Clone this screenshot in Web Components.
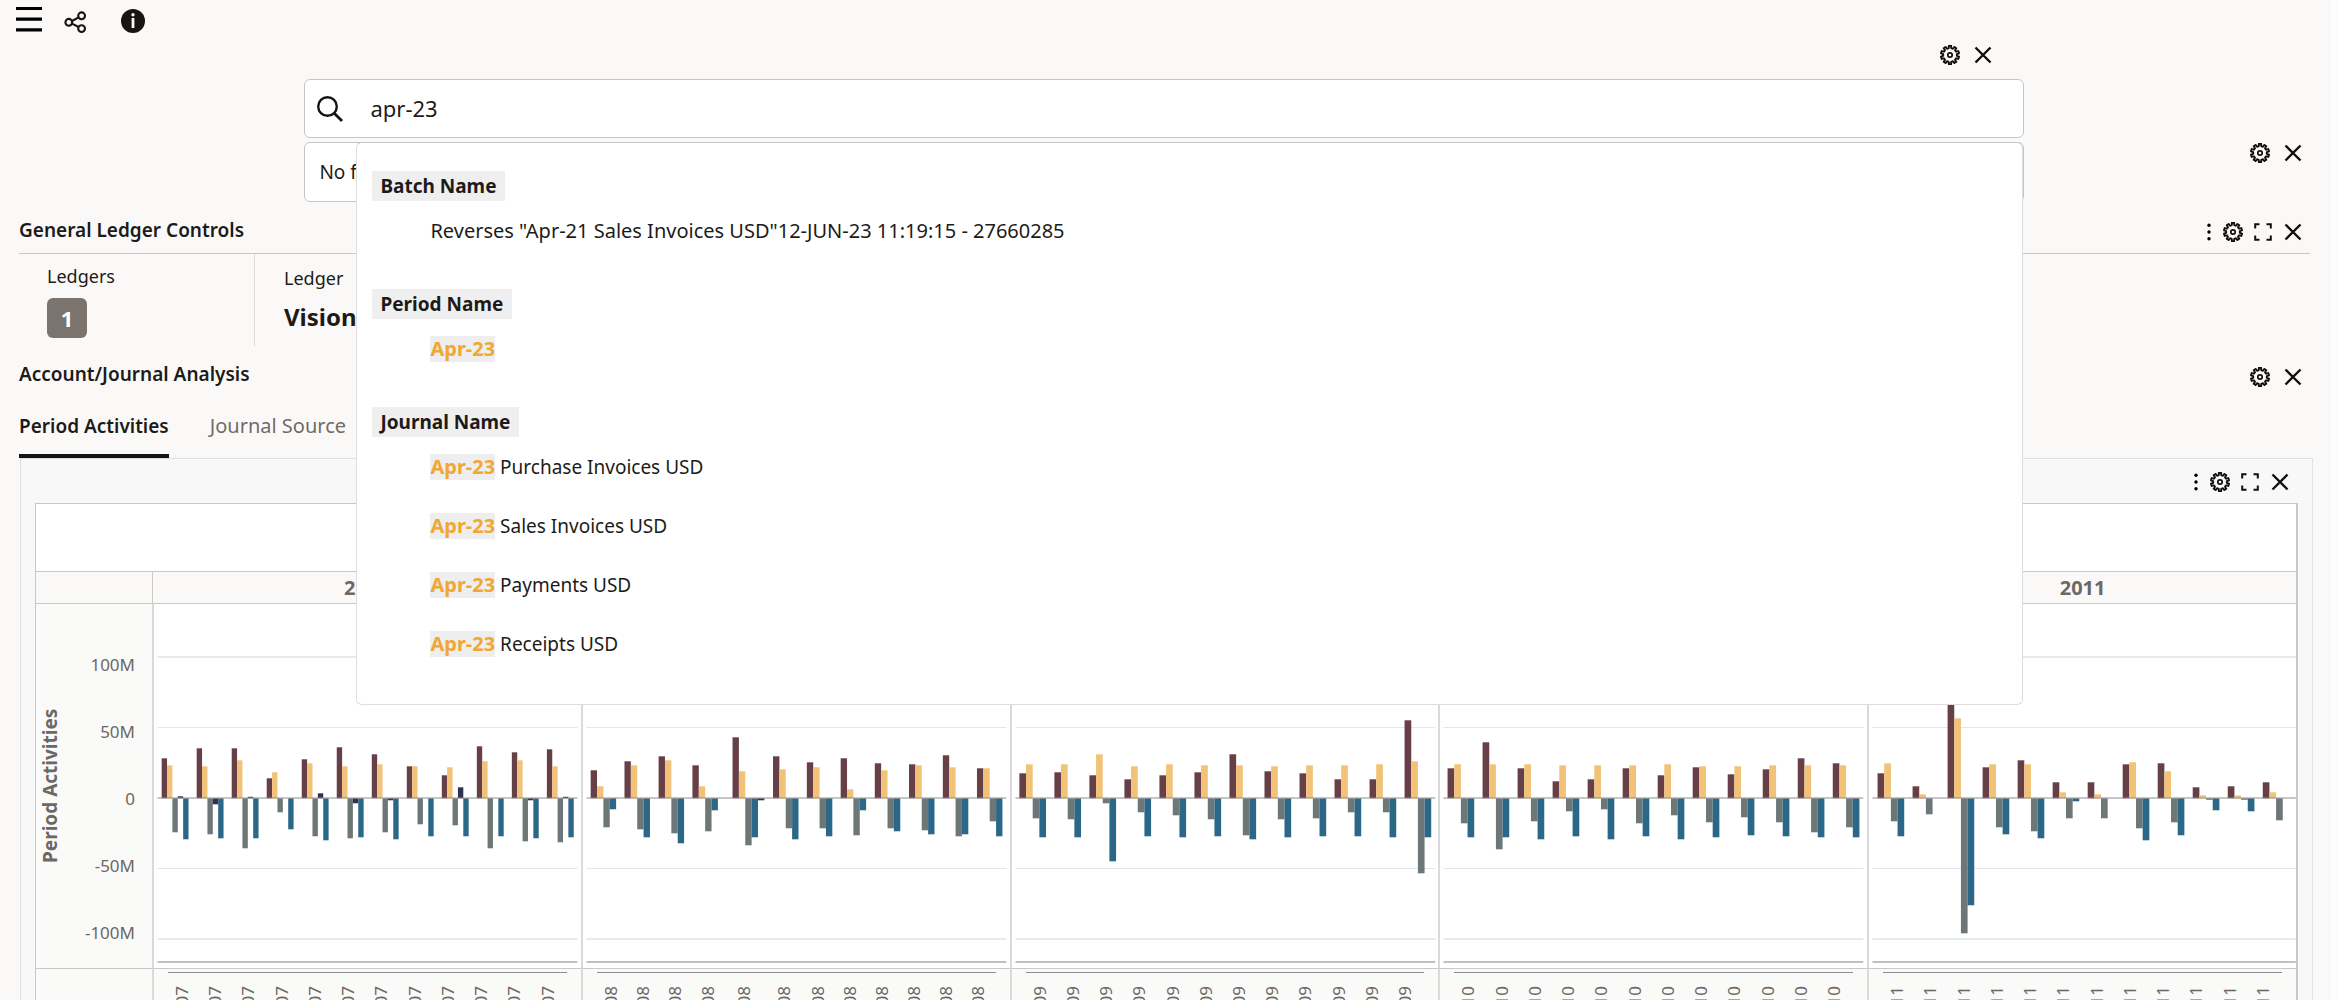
<!DOCTYPE html>
<html lang="en">
<head>
<meta charset="utf-8">
<title>General Ledger</title>
<style>
  html { background: #fefdfd; }
  body {
    margin: 0 7px 0 0;
    height: 100vh;
    overflow: hidden;
    background: #fbf9f8;
    color: #1d1b19;
    font: 19px/28px "Noto Sans", "Open Sans", sans-serif;
  }
</style>
</head>
<body>
<gl-header></gl-header>
<main>
  <search-panel query="apr-23">
    <suggest-group name="Batch Name">
      <suggest-item large>Reverses "Apr-21 Sales Invoices USD"12-JUN-23 11:19:15 - 27660285</suggest-item>
    </suggest-group>
    <suggest-group name="Period Name">
      <suggest-item match="Apr-23"></suggest-item>
    </suggest-group>
    <suggest-group name="Journal Name">
      <suggest-item match="Apr-23"> Purchase Invoices USD</suggest-item>
      <suggest-item match="Apr-23"> Sales Invoices USD</suggest-item>
      <suggest-item match="Apr-23"> Payments USD</suggest-item>
      <suggest-item match="Apr-23"> Receipts USD</suggest-item>
    </suggest-group>
  </search-panel>
  <filter-bar>No f</filter-bar>
  <gl-section heading="General Ledger Controls" actions="menu gear expand close" ruled>
    <kpi-strip>
      <kpi-badge label="Ledgers">1</kpi-badge>
      <kpi-value label="Ledger">Vision</kpi-value>
    </kpi-strip>
  </gl-section>
  <gl-section heading="Account/Journal Analysis" actions="gear close">
    <tab-bar tabs="Period Activities|Journal Source"></tab-bar>
    <chart-panel></chart-panel>
  </gl-section>
</main>

<script>
const gearPath = (() => {
  const teeth = 10, step = Math.PI * 2 / teeth, pts = [];
  for (let i = 0; i < teeth; i++) {
    const a = i * step - Math.PI / 2;
    for (const [r, o] of [[6.9, -.29], [9.2, -.2], [9.2, .2], [6.9, .29]])
      pts.push((10 + r * Math.cos(a + o * step)).toFixed(2) + ' ' + (10 + r * Math.sin(a + o * step)).toFixed(2));
  }
  return 'M' + pts.join('L') + 'Z';
})();

const ICONS = {
  gear: ['Settings', 20, `<path d="${gearPath}" fill="none" stroke="currentColor" stroke-width="1.9" stroke-linejoin="round"/><circle cx="10" cy="10" r="2.2" fill="none" stroke="currentColor" stroke-width="1.7"/>`],
  close: ['Close', 20, '<path d="M2.5 2.5l15 15M17.5 2.5l-15 15" stroke="currentColor" stroke-width="2.4"/>'],
  expand: ['Maximize', 20, '<path d="M2.2 6.5V2.2h4.3M13.5 2.2h4.3v4.3M17.8 13.5v4.3h-4.3M6.5 17.8H2.2v-4.3" fill="none" stroke="currentColor" stroke-width="2"/>'],
  menu: ['Options', 8, '<circle cx="4" cy="3.2" r="1.7"/><circle cx="4" cy="10" r="1.7"/><circle cx="4" cy="16.8" r="1.7"/>'],
};

const define = (name, render) => customElements.define(name, class extends HTMLElement {
  constructor() { super(); this.attachShadow({ mode: 'open' }); }
  connectedCallback() { this.shadowRoot.innerHTML = render(this); }
});

const BUTTON = 'button{display:flex;padding:0;border:0;background:none;color:inherit;font:inherit;cursor:pointer}';

define('action-icons', el => {
  const names = el.getAttribute('names').split(' ');
  return `<style>
    :host{display:block;color:#100f0e}
    div{display:flex;align-items:center;justify-content:flex-end;gap:${names.length > 2 ? 10 : 13}px}
    ${BUTTON}
  </style>
  <div>${names.map(n => {
    const [label, w, body] = ICONS[n];
    return `<button aria-label="${label}"><svg width="${w}" height="20" viewBox="0 0 ${w} 20">${body}</svg></button>`;
  }).join('')}</div>`;
});

define('gl-header', () => `<style>
    :host{display:block}
    header{display:flex;align-items:center;height:39px;padding:0 0 4px 16px;color:#161513}
    ${BUTTON}
    .nav{margin-right:22px}.share{margin-right:34px;padding-top:5px}.info{padding-top:2px}
  </style>
  <header>
    <button class="nav" aria-label="Navigation"><svg width="26" height="30" viewBox="0 0 26 30"><path d="M0 3.5h26M0 14.2h26M0 24.8h26" stroke="#000" stroke-width="3.2"/></svg></button>
    <button class="share" aria-label="Share"><svg width="23" height="22" viewBox="0 0 23 22" fill="none" stroke="currentColor" stroke-width="2.1"><path d="M8 10l6.6-3.6M8 12.6l6.6 3.4"/><circle cx="4.8" cy="11.3" r="3.4"/><circle cx="17.6" cy="4.8" r="3.4"/><circle cx="17.6" cy="17.6" r="3.4"/></svg></button>
    <button class="info" aria-label="Information"><svg width="24" height="24" viewBox="0 0 24 24"><circle cx="12" cy="12" r="12" fill="currentColor"/><path d="M12 9v10" stroke="#fbf9f8" stroke-width="2.8"/><circle cx="12" cy="5.8" r="1.7" fill="#fbf9f8"/></svg></button>
  </header>`);

define('search-panel', el => `<style>
    :host{display:block;padding:0 13.15% 0 13.06%}
    .actions{display:block;padding:2px 31px 14px 0}
    .wrap{position:relative}
    .box{display:flex;align-items:center;box-sizing:border-box;height:59px;border:1px solid #c6c5c4;border-radius:6px;background:#fff}
    label{display:flex;padding:0 12px 0 11px}
    input{flex:1;min-width:0;padding:0 14px 2px;border:0;outline:0;background:none;color:#1d1b19;font:22px/30px "Noto Sans","Open Sans",sans-serif}
    .list{position:absolute;z-index:2;top:63px;left:52px;right:1px;padding:28px 15px 30px;border:1px solid #dedddc;border-top-color:#c6c5c4;border-radius:6px;background:#fff;display:flex;flex-direction:column;gap:28px}
  </style>
  <action-icons class="actions" names="gear close"></action-icons>
  <div class="wrap">
    <div class="box">
      <label for="q" aria-label="Search"><svg width="28" height="28" viewBox="0 0 28 28" fill="none" stroke="#161513" stroke-width="2.4"><circle cx="11.5" cy="11.5" r="9.3"/><path d="M18 18l8 8" stroke-width="2.8"/></svg></label>
      <input id="q" type="text" value="${el.getAttribute('query')}">
    </div>
    <div class="list"><slot></slot></div>
  </div>`);

define('suggest-group', el => `<style>
    :host{display:block}
    b{display:block;width:fit-content;margin-bottom:1px;padding:0 9px 0 8px;background:#f0efef;line-height:30px}
  </style>
  <b>${el.getAttribute('name')}</b><slot></slot>`);

define('suggest-item', el => `<style>
    :host{display:block;padding:16px 0 17px 58px;line-height:26px;white-space:pre}
    :host([large]){font-size:20px}
    mark{display:inline-block;background:#efeeee;color:#f0a733;font-size:20px;font-weight:700}
  </style>${el.hasAttribute('match') ? `<mark>${el.getAttribute('match')}</mark>` : ''}<slot></slot>`);

define('filter-bar', () => `<style>
    :host{display:grid;grid-template-columns:13.06% 1fr 13.15%;margin-top:4px}
    .bar{grid-column:2;box-sizing:border-box;height:60px;padding-left:14px;border:1px solid #c6c5c4;border-radius:6px;background:#fff;line-height:58px}
    action-icons{padding:1px 28px 0 0}
  </style>
  <div class="bar"><slot></slot></div><action-icons names="gear close"></action-icons>`);

define('gl-section', el => `<style>
    :host{display:block}
    .head{display:flex;align-items:center;justify-content:space-between;margin:0 21px 0 19px;height:56px}
    :host([ruled]) .head{height:47px;padding-top:4px;border-bottom:1px solid #c9c7c5}
    h2{margin:0;font-size:19px;font-weight:600;line-height:28px}
    action-icons{padding:5px 7px 0 0}
  </style>
  <div class="head"><h2>${el.getAttribute('heading')}</h2><action-icons names="${el.getAttribute('actions')}"></action-icons></div>
  <slot></slot>`);

define('kpi-strip', () => `<style>:host{display:flex;margin-left:19px;height:92px}</style><slot></slot>`);
define('kpi-badge', el => `<style>
    :host{display:block;box-sizing:border-box;width:236px;padding:8px 0 0 28px;border-right:1px solid #dddbd9;font-size:18px}
    b{display:block;width:40px;margin-top:8px;border-radius:6px;background:#7a736e;color:#fff;font-size:22px;line-height:40px;text-align:center}
  </style>${el.getAttribute('label')}<b><slot></slot></b>`);
define('kpi-value', el => `<style>
    :host{display:block;padding:10px 0 0 29px;font-size:18px}
    b{display:block;margin-top:9px;font-size:24px;line-height:32px}
  </style>${el.getAttribute('label')}<b><slot></slot></b>`);

define('tab-bar', el => `<style>
    :host{display:flex;gap:41px;margin-left:19px}
    button{padding:10px 0 14px;border:0;border-bottom:4px solid transparent;background:none;color:#6f6b68;font:20px/28px "Noto Sans","Open Sans",sans-serif;cursor:pointer}
    button[aria-selected=true]{border-color:#161513;color:#1d1b19;font-size:19px;font-weight:600}
  </style>${el.getAttribute('tabs').split('|').map((t, i) => `<button role="tab" aria-selected="${i === 0}">${t}</button>`).join('')}`);

/* Each month: debit, credit, net debit, opening, net credit (bar heights); 2008 carries a wider fifth month. */
const FACETS = [
  { year: 2007, start: 7.7, pitch: 35.2, bar: 5.4, data: [
    [40,33,-34,2,-41],[50,32,-36,-6,-40],[50,38,-50,1.5,-40],[20,26,-14,0,-31],[39,35,-38,5,-42],[51,32,-40,-5,-39],
    [44,34,-34,-2,-41],[32,32,-26,0,-38],[23,31,-27,11,-38],[52,37,-50,0,-38],[46,38,-43,-2,-40],[49,32,-44,1.5,-39]] },
  { year: 2008, bar: 6.4, starts: [7.7,41.7,76,110,150.3,191,225,259,293.3,327.7,361.7,396], widths: [32,32,33,37,40,34,32,32,32,32,32,32], data: [
    [28,12,-29,-11],[37,33,-31,-39],[42,38,-35,-45],[33,12,-33,-12],[61,27,-47,-39,-2],[42,29,-30,-41],
    [36,31,-30,-38],[40,9,-37,-12],[35,28,-30,-33],[34,33,-32,-36],[43,31,-38,-36],[30,30,-23,-38]] },
  { year: 2009, start: 7.4, pitch: 35.2, bar: 6.7, data: [
    [25,34,-20,-39],[26,34,-21,-39],[23,44,-5,-63],[19,32,-14,-38],[23,34,-17,-39],[26,33,-21,-38],
    [44,33,-37,-41],[27,32,-21,-39],[25,33,-20,-38],[19,33,-14,-38],[19,34,-14,-39],[78,37,-75,-39]] },
  { year: 2010, start: 7.6, pitch: 35.2, bar: 6.7, data: [
    [30,34,-25,-39],[56,34,-51,-39],[30,34,-23,-41],[17,33,-13,-38],[19,33,-11,-41],[30,33,-25,-38],
    [23,34,-17,-41],[31,32,-24,-39],[24,32,-19,-37],[29,33,-24,-38],[40,33,-34,-39],[35,33,-29,-39]] },
  { year: 2011, start: 8.6, pitch: 35.2, bar: 6.7, data: [
    [25,35,-23,-38],[12,4,-16,0],[130,80,-135,-107],[31,34,-29,-36],[38,34,-33,-40],[16,6,-20,-3],
    [16,4,-20,0],[34,36,-30,-42],[35,27,-24,-37],[11,3,-1.5,-12],[12,3,-1.5,-13],[16,6,-22,0]] },
];
const C = { debit: '#673f47', credit: '#f1c277', net: '#6d7777', open: '#2f3350', total: '#2b6787' };

function plot(f, last) {
  const right = last ? 429 : 425.5, zero = 194.3;
  const line = (y, w, c) => `<path d="M3.5 ${y}H${right}" stroke="${c}" stroke-width="${w}"/>`;
  let out = line(53, 2, '#e8ebef') + line(123.5, 1, '#e3e6ea') + line(264.5, 1, '#e3e4ee') + line(335, 2, '#e9e9f0') + line(358, 1.4, '#adadad');
  f.data.forEach((m, i) => {
    const x0 = f.starts ? f.starts[i] : f.start + i * f.pitch;
    const fills = f.year === 2007 ? [C.debit, C.credit, C.net, C.open, C.total] : [C.debit, C.credit, C.net, C.total, C.open];
    m.forEach((v, k) => {
      if (v) out += `<rect x="${(x0 + k * f.bar).toFixed(1)}" y="${v > 0 ? zero - v : zero}" width="${f.bar}" height="${Math.abs(v)}" fill="${fills[k]}"/>`;
    });
  });
  out += line(194, 1, '#8d8d8d');
  return `<svg viewBox="0 0 429 364" preserveAspectRatio="none" role="img" aria-label="Period activities ${f.year}">${out}</svg>`;
}

define('period-chart', () => `<style>
    :host{display:grid;grid-template-columns:116px repeat(5,1fr);border:1px solid #c9c8c7;border-right-width:2px;border-bottom:0;background:#fff;color:#6b6865}
    .title{grid-column:1/-1;height:67px;border-bottom:1px solid #c9c8c7}
    .year{height:31px;border-bottom:1px solid #c9c8c7;background:#fbf9f8;font-weight:700;font-size:20px;line-height:31px;text-align:center}
    .cell{border-left:1px solid #cccbca}
    .cell ~ .cell{border-left:2px solid #dadada}
    .side{display:flex;background:#fafaf9}
    .side b{display:flex;align-items:center;justify-content:center;width:28px;writing-mode:vertical-rl;transform:rotate(180deg)}
    .scale{flex:1;padding:27px 17px 0 0;text-align:right;font-size:17px;line-height:67px}
    .scale span{display:block}
    svg{display:block;width:100%;height:364px}
    .axis{border-top:1px solid #c9c8c7;background:#fafaf9;height:72px}
    .ticks{display:flex;margin:3px 14px 0;padding-top:13px;border-top:1px solid #8d8d8d;font-size:17px;line-height:24px}
    .ticks span{display:flex;flex:1 1 0}
    .ticks i{font-style:normal;writing-mode:vertical-rl;transform:rotate(180deg);margin-left:2px}
  </style>
  <div class="title"></div>
  <div class="year"></div>${FACETS.map(f => `<div class="cell year">${f.year}</div>`).join('')}
  <div class="side"><b>Period Activities</b><div class="scale"><span>100M</span><span>50M</span><span>0</span><span>-50M</span><span>-100M</span></div></div>
  ${FACETS.map((f, i) => `<div class="cell plot">${plot(f, i === 4)}</div>`).join('')}
  <div class="axis"></div>
  ${FACETS.map(f => `<div class="cell axis"><div class="ticks">${f.data.map((_, i) =>
    `<span style="flex-grow:${f.widths ? f.widths[i] : 1}"><i>${String(f.year).slice(2)}</i></span>`).join('')}</div></div>`).join('')}`);

define('chart-panel', () => `<style>
    :host{display:block;margin:0 18px 0 20px;padding:0 14px;border:1px solid #e1e1e1;background:#f8f8f8}
    action-icons{padding:13px 8px 11px 0}
  </style>
  <action-icons names="menu gear expand close"></action-icons>
  <period-chart></period-chart>`);
</script>
</body>
</html>
